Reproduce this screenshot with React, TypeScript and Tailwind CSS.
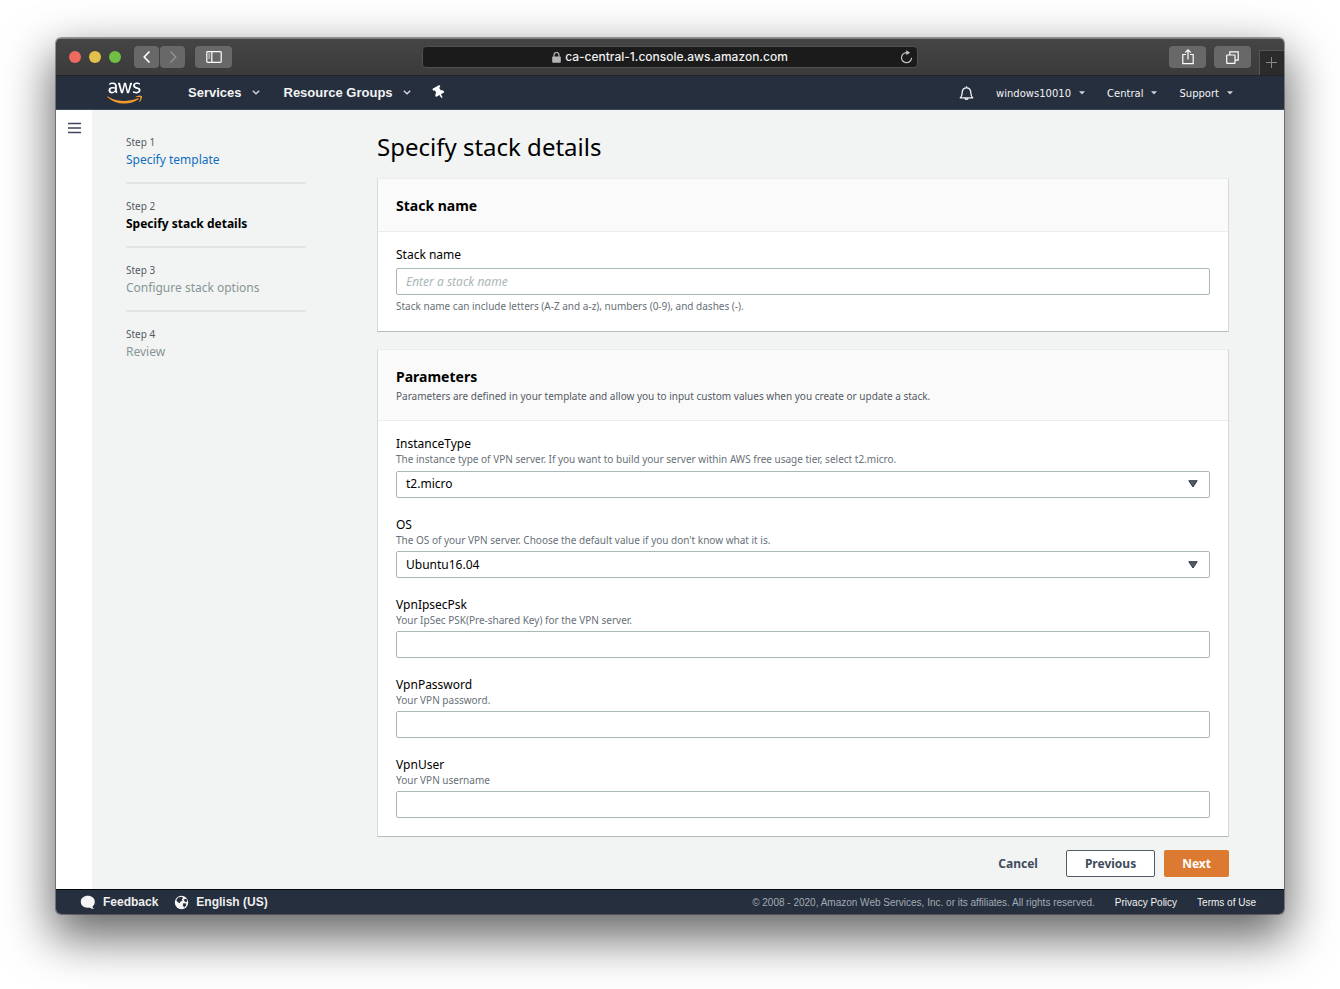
import type { ReactNode } from "react";
import { FaAws, FaThumbtack } from "react-icons/fa";

const ember = "font-['Noto_Sans',sans-serif]";
const arial = "font-['Liberation_Sans',Arial,sans-serif]";

function ToolbarButton({ label, className, children }: { label: string; className: string; children: ReactNode }) {
  return (
    <button
      type="button"
      aria-label={label}
      className={`flex h-[22px] items-center justify-center rounded bg-[#686868] text-white ${className}`}
    >
      {children}
    </button>
  );
}

function BrowserToolbar() {
  return (
    <div className="flex h-[38px] items-center border-t border-[#828282] border-b border-b-[#232323] bg-linear-to-b from-[#454545] to-[#3b3b3b]">
      <div className="flex flex-1 basis-0 items-center">
        <div className="ml-[13px] flex gap-2">
          <span className="size-3 rounded-full bg-[#ed6a5e]" />
          <span className="size-3 rounded-full bg-[#e1c04c]" />
          <span className="size-3 rounded-full bg-[#71be45]" />
        </div>
        <div className="ml-[13px] flex gap-px">
          <ToolbarButton label="Back" className="w-[25px]">
            <svg width="10" height="14" viewBox="0 0 10 14" fill="none" stroke="currentColor" strokeWidth="1.6">
              <path d="M7.5 1.5 2.2 7l5.3 5.5" />
            </svg>
          </ToolbarButton>
          <ToolbarButton label="Forward" className="w-[25px]">
            <svg width="10" height="14" viewBox="0 0 10 14" fill="none" stroke="#939393" strokeWidth="1.4">
              <path d="M2.5 1.5 7.8 7l-5.3 5.5" />
            </svg>
          </ToolbarButton>
        </div>
        <ToolbarButton label="Show sidebar" className="ml-2.5 w-[37px]">
          <svg width="16" height="12" viewBox="0 0 16 12" fill="none" stroke="currentColor" strokeWidth="1.2">
            <rect x="0.8" y="0.6" width="14.4" height="10.8" rx="0.8" />
            <path d="M5.8 0.6v10.8" />
            <path d="M2.2 3h2M2.2 5h2M2.2 7h2" strokeWidth="0.8" />
          </svg>
        </ToolbarButton>
      </div>

      <div className="flex h-[22px] w-[496px] items-center rounded border border-[#505050] bg-[#1b1b1b] px-[3px]">
        <div className="w-4" />
        <div className="flex flex-1 items-center justify-center gap-1">
          <svg width="9" height="11" viewBox="0 0 9 11" fill="none">
            <rect x="0.2" y="4.6" width="8.6" height="6.2" rx="0.8" fill="#b4b4b4" />
            <path d="M2 5V3a2.5 2.5 0 0 1 5 0v2" stroke="#b4b4b4" strokeWidth="1.2" />
          </svg>
          <span className="font-['Inter',sans-serif] text-xs font-medium text-[#f0f0f0]">
            ca-central-1.console.aws.amazon.com
          </span>
        </div>
        <button type="button" aria-label="Reload" className="flex w-4 justify-center text-[#c4c4c4]">
          <svg width="13" height="14" viewBox="0 0 13 14" fill="none" stroke="currentColor" strokeWidth="1.2">
            <path d="M6.500 2.700A5 5 0 1 0 11.500 7.700" />
            <path d="M6.200 0.300 10.200 2.700 6.200 5.100z" fill="currentColor" stroke="none" />
          </svg>
        </button>
      </div>

      <div className="flex flex-1 basis-0 items-center justify-end self-stretch">
        <ToolbarButton label="Share" className="w-[37px]">
          <svg width="12" height="16" viewBox="0 0 12 16" fill="none" stroke="currentColor" strokeWidth="1.2">
            <path d="M4 5.5H0.8v9.2h10.4V5.5H8" />
            <path d="M6 10.5V1M3.2 3.6 6 0.9l2.8 2.7" />
          </svg>
        </ToolbarButton>
        <ToolbarButton label="Show tabs" className="ml-2 w-[37px]">
          <svg width="13" height="13" viewBox="0 0 13 13" fill="none" stroke="currentColor" strokeWidth="1.2">
            <rect x="0.7" y="4" width="8.3" height="8.3" rx="0.6" />
            <path d="M3.8 4V0.8h8.4v8.4H9" />
          </svg>
        </ToolbarButton>
        <button
          type="button"
          aria-label="New tab"
          className="ml-2 flex h-[25px] w-[25px] items-center justify-center self-end border-t border-l border-[#555] bg-[#2b2b2b] text-[#8a8a8a]"
        >
          <svg width="12" height="12" viewBox="0 0 12 12" stroke="currentColor" strokeWidth="1">
            <path d="M5.500 0v11M0 5.500h11" />
          </svg>
        </button>
      </div>
    </div>
  );
}

function Chevron() {
  return (
    <svg width="8" height="5" viewBox="0 0 8 5" fill="none" stroke="#d0d4d9" strokeWidth="1.5">
      <path d="M0.8 0.8 4 3.8 7.2 0.8" />
    </svg>
  );
}

function Caret() {
  return (
    <svg width="6" height="4" viewBox="0 0 6 4" fill="#d0d4d9">
      <path d="M0 0.3h6L3 3.5z" />
    </svg>
  );
}

function ConsoleNav() {
  return (
    <nav className="flex h-[34px] items-center border-b border-[#3b4a5e] bg-[#262f3e] px-[51px] text-[#f2f3f3]">
      <a href="#home" aria-label="AWS home" className="w-[35px]">
        <svg width="0" height="0" className="absolute">
          <defs>
            <linearGradient id="aws-colors" gradientUnits="userSpaceOnUse" x1="0" y1="0" x2="0" y2="512">
              <stop offset="0.605" stopColor="#ffffff" />
              <stop offset="0.605" stopColor="#f39a2e" />
            </linearGradient>
          </defs>
        </svg>
        <FaAws fill="url(#aws-colors)" className="h-7 w-[35px]" />
      </a>
      <div className={`ml-[46px] flex items-center text-[13px] font-bold ${arial}`}>
        <button type="button" className="flex items-center gap-2.5">
          Services <Chevron />
        </button>
        <button type="button" className="ml-6 flex items-center gap-2.5">
          Resource Groups <Chevron />
        </button>
        <button type="button" aria-label="Pin shortcuts" className="ml-[22px]">
          <FaThumbtack className="h-[13px] w-3 -rotate-[30deg] text-white" />
        </button>
      </div>
      <div className="ml-auto flex items-center gap-[22px] pt-px font-['DejaVu_Sans',Verdana,sans-serif] text-[10px]">
        <button type="button" aria-label="Notifications">
          <svg width="15" height="15" viewBox="0 0 15 15" fill="none" stroke="#f2f3f3" strokeWidth="1.3">
            <path d="M1.3 11.8C3.2 10.2 3 8.5 3.2 6.2 3.4 3.6 5 1.8 7.5 1.8s4.1 1.8 4.3 4.4c.2 2.3 0 4 1.9 5.6z" strokeLinejoin="round" />
            <path d="M7.5 0.3v1.5" />
            <path d="M5.4 12.2h4.2a2.1 1.9 0 0 1-4.2 0z" fill="#f2f3f3" stroke="none" />
          </svg>
        </button>
        <button type="button" className="flex items-center gap-2">
          windows10010 <Caret />
        </button>
        <button type="button" className="flex items-center gap-2">
          Central <Caret />
        </button>
        <button type="button" className="flex items-center gap-2">
          Support <Caret />
        </button>
      </div>
    </nav>
  );
}

const steps = [
  { step: "Step 1", title: "Specify template", style: "text-[#0f6fbe]", href: "#template" },
  { step: "Step 2", title: "Specify stack details", style: "font-bold text-black" },
  { step: "Step 3", title: "Configure stack options", style: "text-[#879596]" },
  { step: "Step 4", title: "Review", style: "text-[#879596]" },
];

function WizardSteps() {
  return (
    <ol className="ml-[34px] w-[180px] shrink-0 pt-6">
      {steps.map(({ step, title, style, href }) => (
        <li key={step} className="mb-3.5 border-b-2 border-[#e2e4e4] pb-[13px] last:border-b-0">
          <div className="text-[10px] leading-4 text-[#545b64]">{step}</div>
          <div className={`text-xs leading-[19px] ${style}`}>{href ? <a href={href}>{title}</a> : title}</div>
        </li>
      ))}
    </ol>
  );
}

function Panel({ title, description, children }: { title: string; description?: string; children: ReactNode }) {
  return (
    <section className="border border-[#d5dbdb] border-t-[#eaeded] border-b-[#b5bbbb] bg-white">
      <header className="border-b border-[#eaeded] bg-[#fafafa] px-[18px] pt-[17px] pb-[15px]">
        <h2 className="text-sm leading-5 font-bold text-black">{title}</h2>
        {description && <p className="text-[10px] leading-[18px] text-[#545b64]">{description}</p>}
      </header>
      <div className="px-[18px] pt-[15px] pb-[18px]">{children}</div>
    </section>
  );
}

const control = "h-[27px] w-full rounded-xs border border-[#aab7b8] bg-white px-[9px] text-xs text-black";

function Field({ id, description, options }: { id: string; description: string; options?: string[] }) {
  return (
    <div>
      <label htmlFor={id} className="block text-xs leading-4 text-black">
        {id}
      </label>
      <p className="mb-1 text-[10px] leading-[14px] text-[#687078]">{description}</p>
      {options ? (
        <div className="relative">
          <select id={id} className={`appearance-none ${control}`}>
            {options.map((option) => (
              <option key={option}>{option}</option>
            ))}
          </select>
          <svg className="pointer-events-none absolute top-2.5 right-3" width="10" height="8" viewBox="0 0 10 8" fill="#545b64" stroke="#2c3849">
            <path d="M0.8 0.7h8.4L5 7z" />
          </svg>
        </div>
      ) : (
        <input id={id} type={id === "VpnUser" ? "text" : "password"} className={`block ${control}`} />
      )}
    </div>
  );
}

function StackForm() {
  return (
    <form className="ml-[71px] min-w-0 flex-1">
      <h1 className="pt-5 text-2xl leading-[34px] text-black">Specify stack details</h1>
      <div className="mt-3.5 flex flex-col gap-[17px]">
        <Panel title="Stack name">
          <label htmlFor="stack-name" className="block text-xs leading-4 text-black">
            Stack name
          </label>
          <input
            id="stack-name"
            placeholder="Enter a stack name"
            className={`mt-[5px] block placeholder:text-[#aab7b8] placeholder:italic ${control}`}
          />
          <p className="mt-1 text-[10px] leading-[14px] text-[#687078]">
            Stack name can include letters (A-Z and a-z), numbers (0-9), and dashes (-).
          </p>
        </Panel>
        <Panel
          title="Parameters"
          description="Parameters are defined in your template and allow you to input custom values when you create or update a stack."
        >
          <div className="flex flex-col gap-[19px]">
            <Field
              id="InstanceType"
              description="The instance type of VPN server. If you want to build your server within AWS free usage tier, select t2.micro."
              options={["t2.micro"]}
            />
            <Field
              id="OS"
              description="The OS of your VPN server. Choose the default value if you don't know what it is."
              options={["Ubuntu16.04"]}
            />
            <Field id="VpnIpsecPsk" description="Your IpSec PSK(Pre-shared Key) for the VPN server." />
            <Field id="VpnPassword" description="Your VPN password." />
            <Field id="VpnUser" description="Your VPN username" />
          </div>
        </Panel>
      </div>
      <div className="flex items-center justify-end pt-[13px] pb-3 text-xs font-bold text-[#414c5c]">
        <button type="button" className="mr-7">
          Cancel
        </button>
        <button type="button" className="mr-[9px] h-[27px] rounded-xs border border-[#545b64] bg-white px-[18px]">
          Previous
        </button>
        <button type="submit" className="h-[27px] rounded-xs bg-[#dd7a32] px-[18px] text-white">
          Next
        </button>
      </div>
    </form>
  );
}

function ConsoleFooter() {
  return (
    <footer className={`flex h-[25px] items-center border-t border-[#05080d] bg-[#262f3e] pr-7 pl-6 ${arial}`}>
      <button type="button" className="flex items-center gap-[7px] text-xs font-bold text-[#eee]">
        <svg width="16" height="15" viewBox="0 0 16 15" fill="#f5f5f5">
          <path d="M7.8 0.8c4 0 7 2.5 7 6 0 2-.9 3.6-2.3 4.6.1 1 .8 1.9 1.7 2.6-2 .1-3.6-.5-4.700-1.400-5 .9-8.700-1.800-8.700-5.800 0-3.500 3-6 7-6z" />
        </svg>
        Feedback
      </button>
      <button type="button" className="ml-4 flex items-center gap-[7px] text-xs font-bold text-[#eee]">
        <svg width="15" height="15" viewBox="0 0 15 15">
          <circle cx="7.500" cy="7.500" r="6.700" fill="#f5f5f5" />
          <path d="M4.200 2.400 7.600 1.800 9.300 3 7.700 4.300 8.500 5.500 6.300 6.800 5.800 8.200 3.500 6.900 2.300 5z" fill="#262f3e" />
          <path d="M9.600 4.600 12.400 3.800 13.400 6 12 7.200 10.500 6.300z" fill="#262f3e" />
          <path d="M9.200 8.300 12.300 8.400 11.900 10.600 10.200 12.600 8.900 10.500z" fill="#262f3e" />
        </svg>
        English (US)
      </button>
      <div className="ml-auto flex items-center gap-5 text-[10px] text-[#f2f3f3]">
        <span className="text-[#a3abb3]">
          © 2008 - 2020, Amazon Web Services, Inc. or its affiliates. All rights reserved.
        </span>
        <a href="#privacy">Privacy Policy</a>
        <a href="#terms">Terms of Use</a>
      </div>
    </footer>
  );
}

export default function App() {
  return (
    <div className="min-h-screen bg-white px-14 pt-[38px] pb-[74px]">
      <div className="overflow-hidden rounded-[5px] shadow-[0_0_0_1px_rgba(0,0,0,0.35),0_20px_48px_4px_rgba(0,0,0,0.6)]">
        <BrowserToolbar />
        <ConsoleNav />
        <div className={`flex bg-[#f2f4f3] pr-[55px] ${ember}`}>
          <div className="w-9 shrink-0 self-stretch bg-white pt-3 text-center">
            <button type="button" aria-label="Open navigation" className="mx-auto block">
              <svg width="13" height="12" viewBox="0 0 13 12" stroke="#3b4658" strokeWidth="1.400">
                <path d="M0 1.500h13M0 6h13M0 10.500h13" />
              </svg>
            </button>
          </div>
          <WizardSteps />
          <StackForm />
        </div>
        <ConsoleFooter />
      </div>
    </div>
  );
}
